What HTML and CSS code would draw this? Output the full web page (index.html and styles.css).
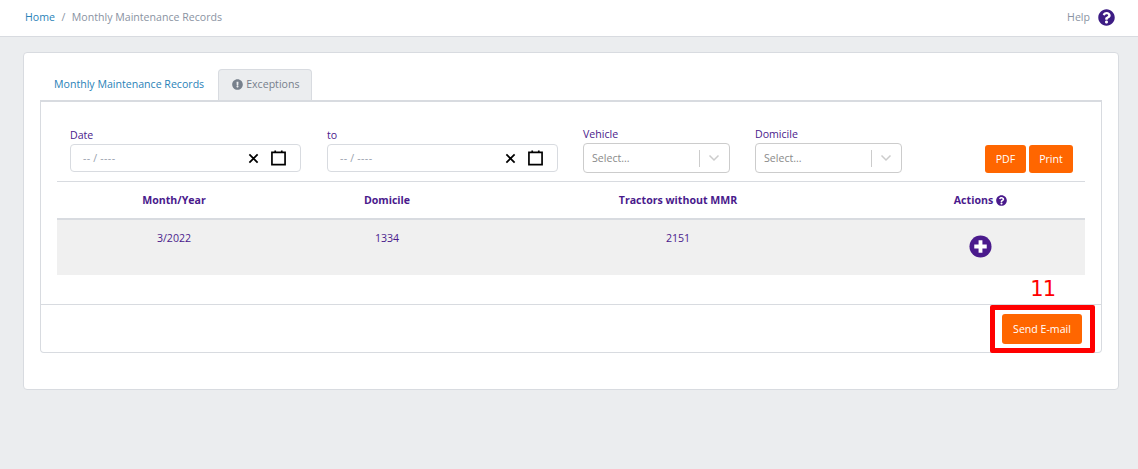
FILE: index.html
```html
<!DOCTYPE html>
<html lang="en">
<head>
<meta charset="utf-8">
<title>Monthly Maintenance Records</title>
<link rel="stylesheet" href="styles.css">
</head>
<body>
<header class="topbar">
  <nav class="crumbs"><a class="crumb-link">Home</a><span class="crumb-sep">/</span><span>Monthly Maintenance Records</span></nav>
  <div class="help"><span>Help</span>
    <svg class="help-icon" viewBox="0 0 512 512"><path fill="#3c1c84" d="M504 256c0 137-111 248-248 248S8 393 8 256 119 8 256 8s248 111 248 248zM263 90c-54 0-89 23-116 64-4 5-3 12 3 16l35 26c5 4 13 3 17-2 18-23 30-36 58-36 21 0 47 13 47 34 0 15-13 23-34 35-25 14-57 31-57 74v7c0 7 5 12 12 12h56c7 0 12-5 12-12v-3c0-29 86-31 86-110 0-60-62-105-119-105zm-7 254c-26 0-47 21-47 47s21 47 47 47 47-21 47-47-21-47-47-47z"/></svg>
  </div>
</header>
<main class="page">
  <section class="card">
    <div class="tabs">
      <a class="tab">Monthly Maintenance Records</a>
      <a class="tab tab-active">
        <svg class="tab-icon" viewBox="0 0 512 512"><path fill="#77808c" d="M504 256c0 137-111 248-248 248S8 393 8 256 119 8 256 8s248 111 248 248zm-248 50c-25 0-46 21-46 46s21 46 46 46 46-21 46-46-21-46-46-46zm-44-166 7 136c0 6 6 11 12 11h50c6 0 12-5 12-11l7-136c0-7-5-12-12-12h-64c-7 0-12 5-12 12z"/></svg>
        Exceptions</a>
    </div>
    <div class="panel">
      <div class="panel-body">
        <div class="filters">
          <div class="field field-date"><label class="label">Date</label>
            <div class="date-input"><span class="date-text">-- / ----</span>
              <svg class="x-icon" viewBox="0 0 12 12"><path d="M1.500 1.500l9 9M10.500 1.500l-9 9" stroke="#000" stroke-width="1.900" fill="none"/></svg>
              <svg class="cal-icon" viewBox="0 0 16 17"><path d="M1 3h14v13H1zM4.500 1v3M11.500 1v3" stroke="#000" stroke-width="1.800" fill="none"/></svg>
            </div>
          </div>
          <div class="field field-date field-date-last"><label class="label">to</label>
            <div class="date-input"><span class="date-text">-- / ----</span>
              <svg class="x-icon" viewBox="0 0 12 12"><path d="M1.500 1.500l9 9M10.500 1.500l-9 9" stroke="#000" stroke-width="1.900" fill="none"/></svg>
              <svg class="cal-icon" viewBox="0 0 16 17"><path d="M1 3h14v13H1zM4.500 1v3M11.500 1v3" stroke="#000" stroke-width="1.800" fill="none"/></svg>
            </div>
          </div>
          <div class="field field-select"><label class="label">Vehicle</label>
            <div class="select"><span class="select-text">Select...</span><i class="select-sep"></i>
              <svg class="chev" viewBox="0 0 12 8"><path d="M1.500 1.500 6 6l4.500-4.500" stroke="#ccc" stroke-width="1.500" fill="none"/></svg>
            </div>
          </div>
          <div class="field field-select"><label class="label">Domicile</label>
            <div class="select"><span class="select-text">Select...</span><i class="select-sep"></i>
              <svg class="chev" viewBox="0 0 12 8"><path d="M1.500 1.500 6 6l4.500-4.500" stroke="#ccc" stroke-width="1.500" fill="none"/></svg>
            </div>
          </div>
          <div class="actions"><button class="btn btn-pdf">PDF</button><button class="btn btn-print">Print</button></div>
        </div>
        <div class="table">
          <div class="row row-head">
            <div>Month/Year</div><div>Domicile</div><div>Tractors without MMR</div>
            <div class="head-actions">Actions
              <svg class="head-icon" viewBox="0 0 512 512"><path fill="#4a1a8c" d="M504 256c0 137-111 248-248 248S8 393 8 256 119 8 256 8s248 111 248 248zM263 90c-54 0-89 23-116 64-4 5-3 12 3 16l35 26c5 4 13 3 17-2 18-23 30-36 58-36 21 0 47 13 47 34 0 15-13 23-34 35-25 14-57 31-57 74v7c0 7 5 12 12 12h56c7 0 12-5 12-12v-3c0-29 86-31 86-110 0-60-62-105-119-105zm-7 254c-26 0-47 21-47 47s21 47 47 47 47-21 47-47-21-47-47-47z"/></svg>
            </div>
          </div>
          <div class="row row-data">
            <div>3/2022</div><div>1334</div><div>2151</div>
            <div class="cell-plus"><svg class="plus-icon" viewBox="0 0 24 24"><circle cx="12" cy="12" r="11.500" fill="#4a1a8c"/><path d="M12 5.500v13M5.500 12h13" stroke="#fff" stroke-width="4" fill="none"/></svg></div>
          </div>
        </div>
      </div>
      <footer class="panel-foot"><button class="btn btn-send">Send E-mail</button>
        <span class="note-num">11</span><span class="note-box"></span>
      </footer>
    </div>
  </section>
</main>
</body>
</html>
```
FILE: styles.css
```css
* { box-sizing: border-box; }
html, body { margin: 0; padding: 0; }
body {
  width: 1138px;
  height: 469px;
  overflow: hidden;
  background: #ebedef;
  font-family: "Open Sans", "Noto Sans", sans-serif;
  font-size: 10.6px;
  color: #4a1a8c;
}
.topbar {
  height: 37px;
  background: #fff;
  border-bottom: 1px solid #d8dbe0;
  display: flex;
  align-items: center;
  justify-content: space-between;
  padding: 0 23px 2px 25px;
}
.crumbs { color: #8a93a2; display: flex; gap: 6.5px; }
.crumb-link { color: #2a82b8; }
.help { display: flex; align-items: center; gap: 8px; color: #8a93a2; }
.help-icon { width: 17px; height: 17px; display: block; }
.page { padding: 15px 19px 0 23px; }
.card {
  height: 338px;
  background: #fff;
  border: 1px solid #d8dbe0;
  border-radius: 4px;
  padding: 16px 16px 0;
}
.tabs { display: flex; height: 31px; }
.tab {
  display: flex;
  align-items: center;
  gap: 3px;
  padding: 0 13px 2px;
  color: #2a82b8;
  border: 1px solid transparent;
}
.tab-active {
  padding-right: 12px;
  color: #77808c;
  background: #ebedef;
  border-color: #d8dbe0;
  border-bottom: 0;
  border-radius: 4px 4px 0 0;
}
.tab-icon { width: 11px; height: 11px; display: block; }
.panel {
  height: 253px;
  border: 1px solid #d8dbe0;
  border-top-width: 2px;
  border-radius: 0 0 4px 4px;
  display: flex;
  flex-direction: column;
  position: relative;
}
.panel-body { flex: 1; padding: 0 16px; }
.filters {
  height: 80px;
  padding: 26px 0 0 13px;
  display: flex;
  align-items: flex-start;
  border-bottom: 1px solid #d8dbe0;
}
.field-date { width: 231px; margin-right: 26px; padding-top: 1px; }
.field-date-last { margin-right: 25px; }
.field-select { width: 147px; margin-right: 25px; }
.label { display: block; height: 15px; line-height: 13px; }
.date-input, .select {
  border: 1px solid #d8dbe0;
  border-radius: 4px;
  display: flex;
  align-items: center;
}
.date-input { height: 28px; padding: 0 14px 0 12px; }
.date-text { flex: 1; color: #98a0ad; word-spacing: -.5px; letter-spacing: .4px; }
.x-icon { width: 11px; height: 11px; margin-right: 12px; display: block; }
.cal-icon { width: 15px; height: 17px; display: block; margin-bottom: 2px; }
.select { height: 30px; border-color: #ccc; padding: 0 9px 0 8px; }
.select-text { flex: 1; color: #8a8a8a; }
.select-sep { width: 1px; height: 17px; background: #ccc; margin-right: 8px; }
.chev { width: 12px; height: 8px; display: block; }
.actions { display: flex; gap: 3px; margin: 17px 0 0 58px; }
.btn {
  border: 0;
  border-radius: 3px;
  background: #ff6600;
  color: #fff;
  font: inherit;
  padding: 0;
  height: 28px;
}
.btn-pdf { width: 41px; }
.btn-print { width: 44px; }
.btn-send { width: 80px; height: 30px; }
.row {
  display: grid;
  grid-template-columns: 234px 192px 390px 212px;
  text-align: center;
}
.row-head {
  height: 38px;
  align-items: center;
  font-weight: 700;
  border-bottom: 2px solid #d8dbe0;
}
.head-actions { display: flex; justify-content: center; align-items: center; gap: 3px; padding-left: 3px; }
.head-icon { width: 11px; height: 11px; display: block; }
.row-data { height: 55px; background: #f0f0f0; padding-top: 11px; }
.cell-plus { display: flex; justify-content: center; padding: 4px 0 0 2px; }
.plus-icon { width: 23px; height: 23px; display: block; }
.panel-foot {
  height: 48px;
  border-top: 1px solid #d8dbe0;
  display: flex;
  justify-content: flex-end;
  align-items: flex-start;
  padding: 9px 19px 0 0;
}
.note-num {
  position: absolute;
  right: 46px;
  top: 175px;
  color: #ff0000;
  font-family: "DejaVu Sans", sans-serif;
  font-size: 21px;
  letter-spacing: -1px;
  line-height: 24px;
}
.note-box {
  position: absolute;
  left: 949px;
  top: 203px;
  width: 105px;
  height: 48px;
  border: 5px solid #ff0000;
  border-radius: 2px;
}
```
